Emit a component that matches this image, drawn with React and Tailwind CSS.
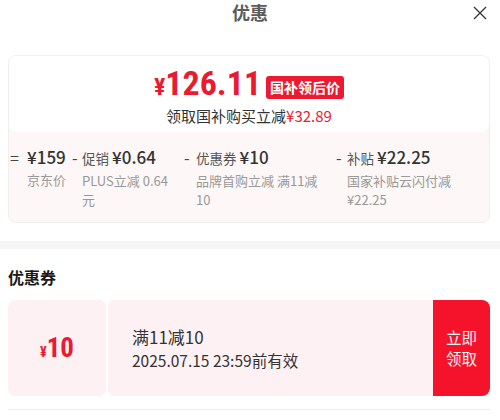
import React from 'react';

const RED = 'text-[#ea1a30]';
const NUM = "font-['Liberation_Sans_Narrow','Roboto_Condensed','Noto_Sans_CJK_SC',sans-serif]";

function Breakdown({ sign, signW, label, amount, sub, className, subPr = 'pr-2' }) {
    return (
        <div className={`flex ${className}`}>
            <span className={`${signW} shrink-0 text-[16px] leading-[22px] text-[#444]`}>{sign}</span>
            <div className="flex-1 min-w-0">
                <div className="flex items-baseline gap-[3px] leading-[22px] text-[#333]">
                    {label && <span className="text-[13.5px] text-[#555]">{label}</span>}
                    <span className="text-[17px] font-medium">{amount}</span>
                </div>
                <p className={`mt-[2px] text-[13px] leading-[19px] text-[#999] ${subPr}`}>{sub}</p>
            </div>
        </div>
    );
}

export default function App() {
    return (
        <div className="w-[500px] h-[420px] bg-white overflow-hidden font-['Noto_Sans_CJK_SC','Noto_Sans',sans-serif]">
            {/* header */}
            <div className="relative h-[25px] flex justify-center">
                <h1 className="text-[18px] font-bold text-[#5c5c5c] leading-[24px]">优惠</h1>
                <svg className="absolute right-[13px] top-[6px] w-[14px] h-[14px]" viewBox="0 0 14 14" fill="none" stroke="#333" strokeWidth="1.3">
                    <path d="M1 1L13 13M13 1L1 13" />
                </svg>
            </div>

            {/* price card */}
            <div className="mt-[30px] ml-[8px] mr-[10px] border border-[#efefef] rounded-[8px] bg-[#fdf7f7] overflow-hidden">
                <div className="h-[76px] bg-white rounded-b-[8px] flex flex-col items-center pt-[8px]">
                    <div className="flex items-center gap-[5px]">
                        <span className={`${RED} ${NUM} font-bold leading-[38px]`}>
                            <span className="text-[24px]">¥</span>
                            <span className="text-[34px]">126.11</span>
                        </span>
                        <span className="bg-[#ec1a30] text-white text-[14px] font-bold leading-[23px] px-[4px] rounded-[3px] mt-[2px]">国补领后价</span>
                    </div>
                    <p className="text-[15px] leading-[20px] text-[#333] mt-[-3px]">
                        领取国补购买立减<span className={RED}>¥32.89</span>
                    </p>
                </div>
                <div className="flex pl-[1px] pt-[14px] pb-[12px] h-[90px]">
                    <Breakdown sign="=" signW="w-[17px]" amount="¥159" sub="京东价" subPr="pr-0" className="w-[62px]" />
                    <Breakdown sign="-" signW="w-[10px]" label="促销" amount="¥0.64" sub="PLUS立减 0.64 元" className="w-[112px]" />
                    <Breakdown sign="-" signW="w-[12px]" label="优惠券" amount="¥10" sub="品牌首购立减 满11减 10" className="w-[152px]" />
                    <Breakdown sign="-" signW="w-[11px]" label="补贴" amount="¥22.25" sub="国家补贴云闪付减 ¥22.25" className="w-[130px]" />
                </div>
            </div>

            <div className="mt-[18px] h-[8px] bg-[#f5f5f8]" />

            {/* coupons */}
            <div className="px-[8px] pr-[10px]">
                <h2 className="mt-[17px] text-[16px] font-bold leading-[22px] text-[#1a1a1a]">优惠券</h2>
                <div className="mt-[12px] h-[96px] flex relative">
                    <div className="w-[98px] bg-[#fdf1f3] rounded-l-[8px] flex items-center justify-center">
                        <span className={`${RED} ${NUM} font-bold`}>
                            <span className="text-[14px]">¥</span>
                            <span className="text-[27px]">10</span>
                        </span>
                    </div>
                    <div className="w-[2px] bg-white" />
                    <div className="flex-1 bg-[#fdf1f3] flex flex-col justify-center pl-[24px] text-[#333]">
                        <p className="text-[17px] leading-[24px]">满11减10</p>
                        <p className="text-[15.5px] leading-[23px]">2025.07.15 23:59前有效</p>
                    </div>
                    <button className="w-[57px] bg-[#f5132b] rounded-r-[8px] text-[#fff3f3] text-[15.5px] leading-[21px] flex items-center justify-center">
                        立即<br />领取
                    </button>
                    <span className="absolute left-[95px] top-[-4px] w-[8px] h-[8px] rounded-full bg-white" />
                    <span className="absolute left-[95px] bottom-[-4px] w-[8px] h-[8px] rounded-full bg-white" />
                </div>
                <div className="mt-[13px] border-t border-[#eee] h-[20px]" />
            </div>
        </div>
    );
}
